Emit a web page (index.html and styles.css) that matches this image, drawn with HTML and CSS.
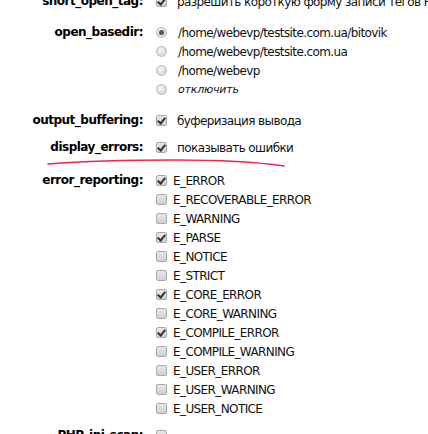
FILE: index.html
```html
<!DOCTYPE html>
<html>
<head>
<meta charset="utf-8">
<link rel="stylesheet" href="styles.css">
</head>
<body>
<div class="settings">
  <div class="row">
    <div class="label">short_open_tag:</div>
    <div class="opts">
      <div class="opt wide"><span class="cb checked"></span><span>разрешить короткую форму записи тегов PHP</span></div>
    </div>
  </div>
  <div class="row">
    <div class="label">open_basedir:</div>
    <div class="opts">
      <div class="opt radio-opt"><span class="rb on"></span><span>/home/webevp/testsite.com.ua/bitovik</span></div>
      <div class="opt radio-opt"><span class="rb"></span><span>/home/webevp/testsite.com.ua</span></div>
      <div class="opt radio-opt"><span class="rb"></span><span>/home/webevp</span></div>
      <div class="opt radio-opt"><span class="rb"></span><span class="off">отключить</span></div>
    </div>
  </div>
  <div class="row">
    <div class="label">output_buffering:</div>
    <div class="opts">
      <div class="opt wide"><span class="cb checked"></span><span>буферизация вывода</span></div>
    </div>
  </div>
  <div class="row tight">
    <div class="label">display_errors:</div>
    <div class="opts">
      <div class="opt wide"><span class="cb checked"></span><span>показывать ошибки</span></div>
    </div>
    <svg class="scribble" width="250" height="12" viewBox="0 0 250 12"><path d="M2 7 C 40 4, 80 3, 130 3 S 210 5, 238 9" fill="none" stroke="#f0254d" stroke-width="1.6" stroke-linecap="round"/></svg>
  </div>
  <div class="row loose">
    <div class="label">error_reporting:</div>
    <div class="opts">
      <div class="opt"><span class="cb checked"></span><span>E_ERROR</span></div>
      <div class="opt"><span class="cb"></span><span>E_RECOVERABLE_ERROR</span></div>
      <div class="opt"><span class="cb"></span><span>E_WARNING</span></div>
      <div class="opt"><span class="cb checked"></span><span>E_PARSE</span></div>
      <div class="opt"><span class="cb"></span><span>E_NOTICE</span></div>
      <div class="opt"><span class="cb"></span><span>E_STRICT</span></div>
      <div class="opt"><span class="cb checked"></span><span>E_CORE_ERROR</span></div>
      <div class="opt"><span class="cb"></span><span>E_CORE_WARNING</span></div>
      <div class="opt"><span class="cb checked"></span><span>E_COMPILE_ERROR</span></div>
      <div class="opt"><span class="cb"></span><span>E_COMPILE_WARNING</span></div>
      <div class="opt"><span class="cb"></span><span>E_USER_ERROR</span></div>
      <div class="opt"><span class="cb"></span><span>E_USER_WARNING</span></div>
      <div class="opt"><span class="cb"></span><span>E_USER_NOTICE</span></div>
    </div>
  </div>
  <div class="row tight">
    <div class="label">PHP_ini_scan:</div>
    <div class="opts">
      <div class="opt wide"><span class="cb"></span><span></span></div>
    </div>
  </div>
</div>
</body>
</html>
```
FILE: styles.css
```css
html, body {
  margin: 0;
  padding: 0;
  background: #fff;
  overflow: hidden;
}
body {
  font-family: "DejaVu Sans", Verdana, sans-serif;
  font-size: 12px;
  letter-spacing: -0.6px;
  color: #111;
}
.settings {
  margin-top: -8px;
  display: flex;
  flex-direction: column;
  gap: 12px;
}
.row {
  position: relative;
  display: grid;
  grid-template-columns: 143px 1fr;
  column-gap: 13px;
}
.row.tight { margin-top: -4px; }
.row.loose { margin-top: 2px; }
.label {
  text-align: right;
  font-weight: bold;
  font-size: 12px;
  letter-spacing: -0.5px;
  line-height: 19px;
  color: #000;
  white-space: nowrap;
}
.opts {
  display: flex;
  flex-direction: column;
}
.opt {
  display: flex;
  align-items: center;
  height: 19px;
  gap: 6px;
  white-space: nowrap;
}
.opt.wide { gap: 10px; }
.opt.radio-opt { gap: 11px; }
.off { font-style: italic; font-size: 11px; letter-spacing: -0.2px; }
.cb {
  position: relative;
  flex: none;
  width: 9px;
  height: 9px;
  border: 1px solid #a9a9a9;
  border-radius: 2px;
  background: linear-gradient(#e8e8e8, #d0d0d0);
}
.cb.checked::after {
  content: "";
  position: absolute;
  left: 2px;
  top: 0px;
  width: 3px;
  height: 6px;
  border: solid #333;
  border-width: 0 2px 2px 0;
  transform: rotate(40deg);
}
.rb {
  position: relative;
  flex: none;
  width: 9px;
  height: 9px;
  border: 1px solid #b8b8b8;
  border-radius: 50%;
  background: radial-gradient(circle at 40% 35%, #f4f4f4, #d0d0d0);
}
.rb.on::after {
  content: "";
  position: absolute;
  left: 2px;
  top: 2px;
  width: 5px;
  height: 5px;
  border-radius: 50%;
  background: #555;
}
.scribble {
  position: absolute;
  left: 46px;
  top: 19px;
}
```
